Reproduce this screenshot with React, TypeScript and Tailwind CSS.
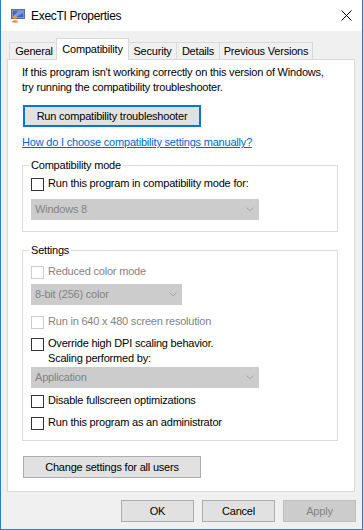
import React from 'react';

const tabs = [
  { label: 'General', w: 'w-[50px]' },
  { label: 'Compatibility', w: 'w-[73px]', active: true },
  { label: 'Security', w: 'w-[49px]' },
  { label: 'Details', w: 'w-[44px]' },
  { label: 'Previous Versions', w: 'w-[94px]' },
];

function Checkbox({ label, disabled, className = '' }: { label: React.ReactNode; disabled?: boolean; className?: string }) {
  return (
    <div className={`flex items-start gap-[4px] leading-[15px] ${className}`}>
      <span
        className={`mt-[2px] w-[13px] h-[13px] shrink-0 bg-white border ${
          disabled ? 'border-[#cccccc]' : 'border-[#333333]'
        }`}
      />
      <span className={disabled ? 'text-[#838383]' : ''}>{label}</span>
    </div>
  );
}

function Select({ value, w, className = '' }: { value: string; w: string; className?: string }) {
  return (
    <div
      className={`${w} h-[21px] bg-[#cccccc] border border-[#cccccc] flex items-center justify-between pl-[3px] pr-[4px] text-[#838383] ${className}`}
    >
      <span>{value}</span>
      <svg width="8" height="5" viewBox="0 0 8 5">
        <path d="M0.5 0.5 L4 4 L7.5 0.5" fill="none" stroke="#a6a6a6" strokeWidth="1" />
      </svg>
    </div>
  );
}

function Button({ children, className = '', disabled, focused }: { children: React.ReactNode; className?: string; disabled?: boolean; focused?: boolean }) {
  return (
    <div
      className={`h-[22px] flex items-center justify-center ${
        disabled
          ? 'bg-[#cccccc] border border-[#bfbfbf] text-[#838383]'
          : focused
          ? 'bg-[#e1e1e1] border-2 border-[#0078d7]'
          : 'bg-[#e1e1e1] border border-[#adadad]'
      } ${className}`}
    >
      {children}
    </div>
  );
}

function AppIcon() {
  return (
    <svg width="16" height="15" viewBox="0 0 16 15">
      <rect x="1.5" y="1.5" width="13" height="9" fill="#7d93b8" stroke="#5c6f92" />
      <rect x="3" y="3" width="10" height="6" fill="#3e63c6" />
      <path d="M3 9 L8 3 L13 3 L13 5 L6 9 Z" fill="#8fb1ea" opacity="0.7" />
      <circle cx="5" cy="9" r="2" fill="#e69a3c" />
      <path d="M2 14.5 C2 11.5 8 11.5 8 14.5 Z" fill="#d98a2b" />
    </svg>
  );
}

export default function App() {
  return (
    <div className="w-[363px] h-[530px] bg-[#f0f0f0] border-x border-b border-[#1883d7] flex flex-col font-['Liberation_Sans',Arial,sans-serif] text-[11px] tracking-[-0.2px] text-black overflow-hidden">
      <div className="h-[31px] bg-white flex items-center pl-[9px] pr-[10px] shrink-0">
        <AppIcon />
        <span className="ml-[5px] flex-1 text-[12px] tracking-[-0.3px]">ExecTI Properties</span>
        <svg width="11" height="11" viewBox="0 0 11 11">
          <path d="M0.5 0.5 L10.5 10.5 M10.5 0.5 L0.5 10.5" stroke="#000" strokeWidth="1" />
        </svg>
      </div>

      <div className="flex-1 pt-[7px] pl-[6px]">
        <div className="flex items-end h-[21px] ml-[2px] relative z-10">
          {tabs.map((t) =>
            t.active ? (
              <div
                key={t.label}
                className={`${t.w} -ml-[2px] -mr-[1px] h-[22px] -mb-px bg-white border border-b-0 border-[#d9d9d9] flex justify-center pt-[3px] leading-[15px]`}
              >
                {t.label}
              </div>
            ) : (
              <div
                key={t.label}
                className={`${t.w} h-[17px] border border-b-0 border-[#d9d9d9] -mr-px flex items-center justify-center leading-[15px]`}
              >
                {t.label}
              </div>
            )
          )}
        </div>

        <div className="w-[348px] h-[433px] bg-white border border-[#d9d9d9] px-[14px] pt-[5px]">
          <p className="leading-[15px]">
            If this program isn't working correctly on this version of Windows,
            <br />
            try running the compatibility troubleshooter.
          </p>
          <Button focused className="w-[178px] h-[21px] mt-[10px] ml-px">
            Run compatibility troubleshooter
          </Button>
          <div className="mt-[8px] leading-[15px] text-[#0066cc] underline">
            How do I choose compatibility settings manually?
          </div>

          <fieldset className="mt-[8px] w-[316px] border border-[#dcdcdc] px-[8px] pt-[3px] pb-[11px]">
            <legend className="px-[2px] -ml-[2px] leading-[15px]">Compatibility mode</legend>
            <Checkbox label="Run this program in compatibility mode for:" />
            <Select value="Windows 8" w="w-[228px]" className="mt-[8px]" />
          </fieldset>

          <fieldset className="mt-[11px] w-[316px] border border-[#dcdcdc] px-[8px] pt-[6px] pb-[10px]">
            <legend className="px-[2px] -ml-[2px] leading-[15px]">Settings</legend>
            <Checkbox disabled label="Reduced color mode" />
            <Select value="8-bit (256) color" w="w-[151px]" className="mt-[5px]" />
            <Checkbox disabled label="Run in 640 x 480 screen resolution" className="mt-[9px]" />
            <Checkbox
              className="mt-[7px]"
              label={
                <>
                  Override high DPI scaling behavior.
                  <br />
                  Scaling performed by:
                </>
              }
            />
            <Select value="Application" w="w-[228px]" className="mt-[1px]" />
            <Checkbox label="Disable fullscreen optimizations" className="mt-[5px]" />
            <Checkbox label="Run this program as an administrator" className="mt-[7px]" />
          </fieldset>

          <Button className="w-[178px] h-[21px] mt-[15px] ml-px">Change settings for all users</Button>
        </div>

        <div className="w-[349px] flex justify-end gap-[8px] mt-[8px]">
          <Button className="w-[73px]">OK</Button>
          <Button className="w-[73px]">Cancel</Button>
          <Button disabled className="w-[73px]">Apply</Button>
        </div>
      </div>
    </div>
  );
}
